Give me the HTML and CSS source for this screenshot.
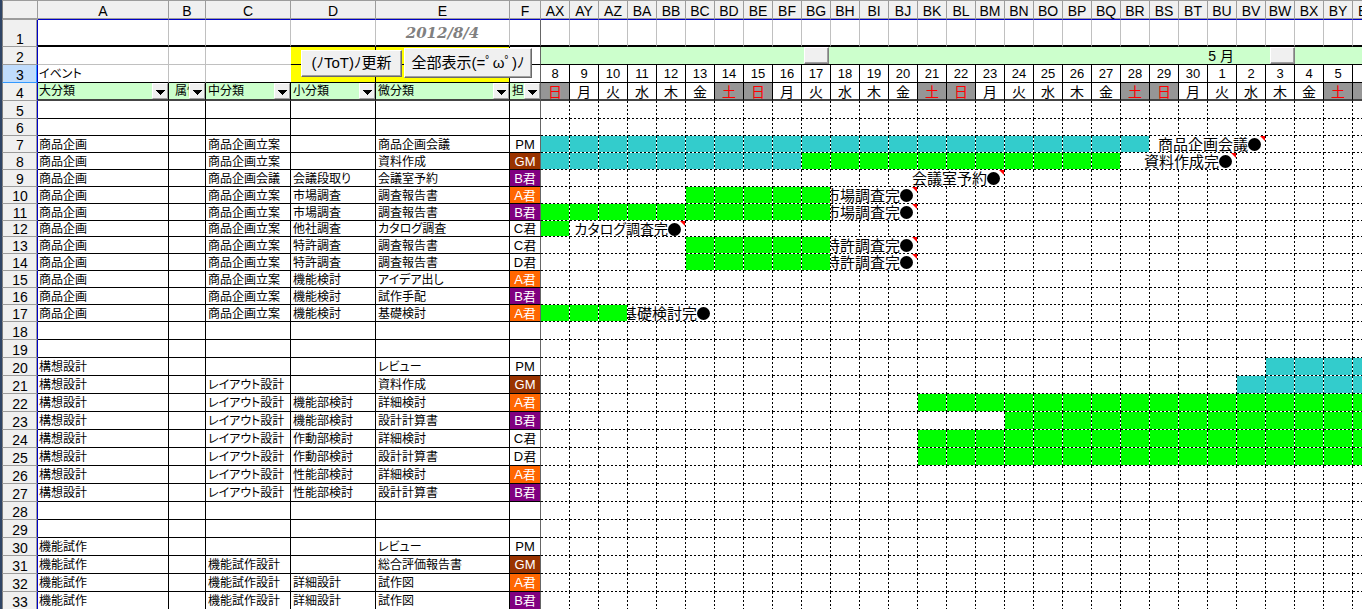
FILE: index.html
```html
<!DOCTYPE html>
<html lang="ja">
<head>
<meta charset="utf-8">
<title>商品開発スケジュール</title>
<link rel="stylesheet" href="styles.css">
</head>
<body>
<main class="window">
<table class="sheet" id="sheet">
<colgroup id="cols"></colgroup>
<thead id="head"></thead>
<tbody id="body"></tbody>
</table>
<div class="actions">
<button type="button" class="action action-update">(ﾉToT)ﾉ更新</button>
<button type="button" class="action action-all">全部表示(=ﾟωﾟ)ﾉ</button>
</div>
</main>
<script src="sheet.js"></script>
</body>
</html>
```
FILE: styles.css
```css
* { box-sizing: border-box; }

body {
  margin: 0;
  background: #fff;
  color: #000;
  font-family: "Liberation Sans", "Noto Sans CJK JP", sans-serif;
  overflow: hidden;
}

.window {
  position: relative;
  min-height: 100vh;
  border-left: 2px solid #2f4566;
  overflow: hidden;
}

.sheet {
  width: 100%;
  table-layout: fixed;
  border-collapse: separate;
  border-spacing: 0;
  font-size: 12px;
  line-height: 14px;
}

.c-num { width: 36px; }
.c-a { width: 131px; }
.c-b { width: 37px; }
.c-c, .c-d { width: 85px; }
.c-e { width: 134px; }
.c-f { width: 31px; }
.c-day { width: 29px; }

.sheet th, .sheet td {
  padding: 0;
  font-weight: normal;
  white-space: nowrap;
  overflow: hidden;
  vertical-align: middle;
}

/* row heights */
.h16 { height: 16px; }
.h17 { height: 17px; }
.h18 { height: 18px; }
.h20 { height: 20px; }
.h27 { height: 27px; }

/* column letters */
.sheet .letter {
  background: #f0f0f0;
  border-top: 1px solid #9c9c9c;
  border-right: 1px solid #9c9c9c;
  border-bottom: 1px solid #0000c8;
  box-shadow: inset 0 -1px #9c9c9c;
  font-size: 14px;
  line-height: 16px;
  text-align: center;
  padding-top: 2px;
}
.sheet .corner { border-left: 1px solid #808080; border-bottom-color: #9c9c9c; }

/* row numbers */
.sheet .num {
  background: #f0f0f0;
  border-left: 1px solid #808080;
  border-right: 1px solid #0000c8;
  border-bottom: 1px solid #9c9c9c;
  box-shadow: inset -1px 0 #9c9c9c;
  font-size: 14px;
  line-height: 14px;
  text-align: center;
  vertical-align: bottom;
}
.sheet .num-active {
  background: #c0dcfc;
  border-bottom-color: #3399ff;
  box-shadow: inset -1px 0 #3399ff;
}

/* left pane */
.sheet .cell {
  border-right: 1px solid #000;
  border-bottom: 1px solid #000;
  padding-top: 1px;
  padding-left: 1px;
  font-feature-settings: "palt";
}
.sheet .cell-c, .sheet .cell-d, .sheet .cell-e { padding-left: 2px; }
.sheet .cell-f, .sheet .pane-edge { border-right-color: #666; }
.sheet .cell-f { padding-left: 0; text-align: center; font-size: 13px; }
.sheet .gm { background: #993300; color: #fff; }
.sheet .ak { background: #ff6600; color: #fff; }
.sheet .bk { background: #800080; color: #fff; }

.sheet .top { border-right: 1px solid #c0c0c0; border-bottom: 2px solid #000; }
.sheet .pane-edge.top { border-right-color: #666; }
.sheet .date {
  font: italic bold 15px/18px "DejaVu Serif", serif;
  color: #808080;
  text-align: center;
}
.sheet .soft { border-right-color: #c0c0c0; }
.sheet .soft-bottom { border-bottom-color: #c0c0c0; }
.sheet .yellow { background: #ffff00; }
.sheet .no-right { border-right: 0; }

/* filter row */
.sheet .filter { background: #ccffcc; border-bottom: 2px solid #444; padding-top: 0; }
.filter-box { display: flex; justify-content: space-between; align-items: center; height: 16px; }
.filter-label { flex: 1; min-width: 0; overflow: hidden; text-align: left; font-size: 12px; }
.filter-b .filter-label { padding-left: 5px; }
.filter-f .filter-label { padding-left: 2px; }
.drop {
  flex: none;
  width: 16px;
  height: 16px;
  padding: 2px 0 0;
  border: 1px solid;
  border-color: #fff #a0a0a0 #a0a0a0 #fff;
  background: #f0f0f0;
  display: flex;
  align-items: center;
  justify-content: center;
}

/* calendar pane */
.sheet .month { background: #ccffcc; border-bottom: 1px solid #000; }
.month-box { display: flex; justify-content: flex-end; align-items: center; height: 17px; font-size: 14px; }
.month-label { margin-right: 36px; }
.month-mark {
  width: 25px;
  height: 17px;
  padding: 0;
  border: 1px solid;
  border-color: #fff #808080 #808080 #fff;
  box-shadow: inset -1px -1px #a0a0a0;
  background: #f0f0f0;
}
.month-first .month-mark { margin-right: 2px; }

.sheet .day, .sheet .week { border-right: 1px solid #000; text-align: center; }
.sheet .day { border-bottom: 1px solid #000; font-size: 13px; padding-top: 1px; }
.sheet .week { border-bottom: 2px solid #444; font-size: 14px; line-height: 14px; padding-top: 2px; }
.sheet .holiday { background: #969696; color: #ff0000; }
.sheet .day-last { text-align: left; padding-left: 11px; }
.sheet .letter-last { text-align: left; padding-left: 5px; }
.sheet tr > :last-child { border-right: 0; }

.sheet .slot {
  --fill: #fff;
  --edge: 1px;
  position: relative;
  background:
    repeating-linear-gradient(to right, #000 0 2px, #fff 2px 4px) left bottom / 100% 1px no-repeat,
    repeating-linear-gradient(to bottom, #000 0 2px, #fff 2px 4px) right top / var(--edge) 100% no-repeat,
    var(--fill);
}
.sheet .slot:last-child { --edge: 0px; }
.sheet .plan { --fill: #33cccc; }
.sheet .work { --fill: #00ff00; }

.milestone {
  display: flex;
  justify-content: flex-end;
  align-items: center;
  height: 16px;
  margin-right: 4px;
  overflow: hidden;
  font-size: 15px;
  line-height: 14px;
  font-family: "Noto Sans CJK JP", sans-serif;
  font-feature-settings: "palt";
}
.milestone-long { font-size: 14px; }
.milestone-text { flex: none; padding-bottom: 2px; }
.dot { flex: none; width: 13px; height: 13px; margin-right: 1px; border-radius: 50%; background: #000; }
.note::after {
  content: "";
  position: absolute;
  top: 0;
  right: 1px;
  width: 5px;
  height: 5px;
  background: #ff0000;
  clip-path: polygon(0 0, 100% 0, 100% 100%);
}

/* macro buttons floating over the sheet */
.actions {
  position: absolute;
  top: 48px;
  left: 299px;
  display: flex;
  align-items: center;
  gap: 2px;
}
.action {
  padding: 0;
  border: 1px solid;
  border-color: #fff #696969 #696969 #fff;
  box-shadow: inset -1px -1px #a0a0a0;
  background: #f0f0f0;
  color: #000;
  font-family: "Liberation Sans", "Noto Sans CJK JP", sans-serif;
  font-size: 15px;
  line-height: 20px;
  white-space: nowrap;
}
.action-update { width: 101px; height: 27px; }
.action-all { width: 128px; height: 30px; }
```
FILE: sheet.js
```js
const DAY_COUNT = 29;
const WEEK = "日月火水木金土";
const people = { GM: "gm", "A君": "ak", "B君": "bk" };

// number, height, A, C, D, E, F, bars [type, from, to], milestone [text, from, span, note]
const P = "商品企画", R = "商品企画立案", K = "構想設計", L = "レイアウト設計", S = "機能試作", T = "機能試作設計";
const rows = [
  [5, 18], [6, 17],
  [7, 17, P, R, "", "商品企画会議", "PM", [["plan", 0, 20]], ["商品企画会議", 21, 4, true]],
  [8, 17, P, R, "", "資料作成", "GM", [["plan", 0, 8], ["work", 9, 19]], ["資料作成完", 20, 4, true]],
  [9, 17, P, "商品企画会議", "会議段取り", "会議室予約", "B君", [], ["会議室予約", 12, 4, true]],
  [10, 17, P, R, "市場調査", "調査報告書", "A君", [["work", 5, 9]], ["市場調査完", 10, 3, true]],
  [11, 17, P, R, "市場調査", "調査報告書", "B君", [["work", 0, 9]], ["市場調査完", 10, 3, true]],
  [12, 16, P, R, "他社調査", "カタログ調査", "C君", [["work", 0, 0]], ["カタログ調査完", 1, 4, true]],
  [13, 17, P, R, "特許調査", "調査報告書", "C君", [["work", 5, 9]], ["特許調査完", 10, 3, true]],
  [14, 17, P, R, "特許調査", "調査報告書", "D君", [["work", 5, 9]], ["特許調査完", 10, 3, true]],
  [15, 17, P, R, "機能検討", "アイデア出し", "A君"],
  [16, 17, P, R, "機能検討", "試作手配", "B君"],
  [17, 17, P, R, "機能検討", "基礎検討", "A君", [["work", 0, 2]], ["基礎検討完", 3, 3, false]],
  [18, 18], [19, 18],
  [20, 18, K, "", "", "レビュー", "PM", [["plan", 25, 28]]],
  [21, 18, K, L, "", "資料作成", "GM", [["plan", 24, 28]]],
  [22, 18, K, L, "機能部検討", "詳細検討", "A君", [["work", 13, 28]]],
  [23, 18, K, L, "機能部検討", "設計計算書", "B君", [["work", 16, 28]]],
  [24, 18, K, L, "作動部検討", "詳細検討", "C君", [["work", 13, 28]]],
  [25, 18, K, L, "作動部検討", "設計計算書", "D君", [["work", 13, 28]]],
  [26, 18, K, L, "性能部検討", "詳細検討", "A君"],
  [27, 18, K, L, "性能部検討", "設計計算書", "B君"],
  [28, 18], [29, 18],
  [30, 18, S, "", "", "レビュー", "PM"],
  [31, 18, S, T, "", "総合評価報告書", "GM"],
  [32, 18, S, T, "詳細設計", "試作図", "A君"],
  [33, 18, S, T, "詳細設計", "試作図", "B君"]
];

const days = Array.from({ length: DAY_COUNT }, (_, i) => i);
const columnName = i => i < 3 ? "A" + "XYZ"[i] : "B" + String.fromCharCode(62 + i);
const each = fn => days.map(fn).join("");
const last = (i, name) => i === DAY_COUNT - 1 ? " " + name : "";

document.getElementById("cols").innerHTML =
  ["num", "a", "b", "c", "d", "e", "f"].map(n => `<col class="c-${n}">`).join("") +
  each(i => i === DAY_COUNT - 1 ? "<col>" : '<col class="c-day">');

document.getElementById("head").innerHTML = `<tr class="h20"><th class="letter corner"></th>` +
  [..."ABCDEF"].map(c => `<th class="letter" scope="col">${c}</th>`).join("") +
  each(i => `<th class="letter${last(i, "letter-last")}" scope="col">${columnName(i)}</th>`) + "</tr>";

const drop = label => `<button type="button" class="drop" aria-label="${label}の絞り込み"><svg width="9" height="5" viewBox="0 0 9 5" shape-rendering="crispEdges"><path d="M0 0H9V1H8V2H7V3H6V4H5V5H4V4H3V3H2V2H1V1H0Z"/></svg></button>`;
const filter = (key, label) => `<td class="cell filter cell-${key} filter-${key}"><div class="filter-box"><span class="filter-label">${label}</span>${drop(label)}</div></td>`;
const mark = '<button type="button" class="month-mark" aria-label="月の切り替え"></button>';

let html = `<tr class="h27"><th class="num" scope="row">1</th>
<td class="top"></td><td class="top"></td><td class="top"></td><td class="top"></td><td class="top date">2012/8/4</td><td class="top pane-edge"></td>${each(() => '<td class="top"></td>')}</tr>`;

html += `<tr class="h18"><th class="num" scope="row">2</th>
<td class="cell soft soft-bottom"></td><td class="cell soft soft-bottom"></td><td class="cell no-right soft-bottom"></td><td class="cell yellow"></td><td class="cell yellow"></td><td class="cell pane-edge"></td>
<td class="month month-first" colspan="10"><div class="month-box">${mark}</div></td>
<td class="month" colspan="16"><div class="month-box"><span class="month-label">5 月</span>${mark}</div></td>
<td class="month" colspan="3"></td></tr>`;

html += `<tr class="h18"><th class="num num-active" scope="row">3</th>
<td class="cell soft">イベント</td><td class="cell soft"></td><td class="cell no-right"></td><td class="cell yellow"></td><td class="cell yellow"></td><td class="cell pane-edge"></td>` +
  each(i => `<td class="day${last(i, "day-last")}">${i < 23 ? i + 8 : i - 22}</td>`) + "</tr>";

html += `<tr class="h18"><th class="num" scope="row">4</th>` +
  filter("a", "大分類") + filter("b", "属性") + filter("c", "中分類") + filter("d", "小分類") + filter("e", "微分類") + filter("f", "担当") +
  each(i => `<td class="week${[0, 6].includes(i % 7) ? " holiday" : ""}${last(i, "day-last")}">${WEEK[i % 7]}</td>`) + "</tr>";

for (const [n, h, a = "", c = "", d = "", e = "", f = "", bars = [], goal] of rows) {
  html += `<tr class="h${h}"><th class="num" scope="row">${n}</th><td class="cell">${a}</td><td class="cell"></td><td class="cell cell-c">${c}</td><td class="cell cell-d">${d}</td><td class="cell cell-e">${e}</td><td class="cell cell-f ${people[f] || ""}">${f}</td>`;
  for (let i = 0; i < DAY_COUNT; i++) {
    if (goal && goal[1] === i) {
      html += `<td class="slot${goal[3] ? " note" : ""}" colspan="${goal[2]}"><div class="milestone${goal[0].length > 6 ? " milestone-long" : ""}"><span class="milestone-text">${goal[0]}</span><span class="dot"></span></div></td>`;
      i += goal[2] - 1;
    } else {
      const bar = bars.find(b => i >= b[1] && i <= b[2]);
      html += `<td class="slot ${bar ? bar[0] : ""}"></td>`;
    }
  }
  html += "</tr>";
}
document.getElementById("body").innerHTML = html;
```
